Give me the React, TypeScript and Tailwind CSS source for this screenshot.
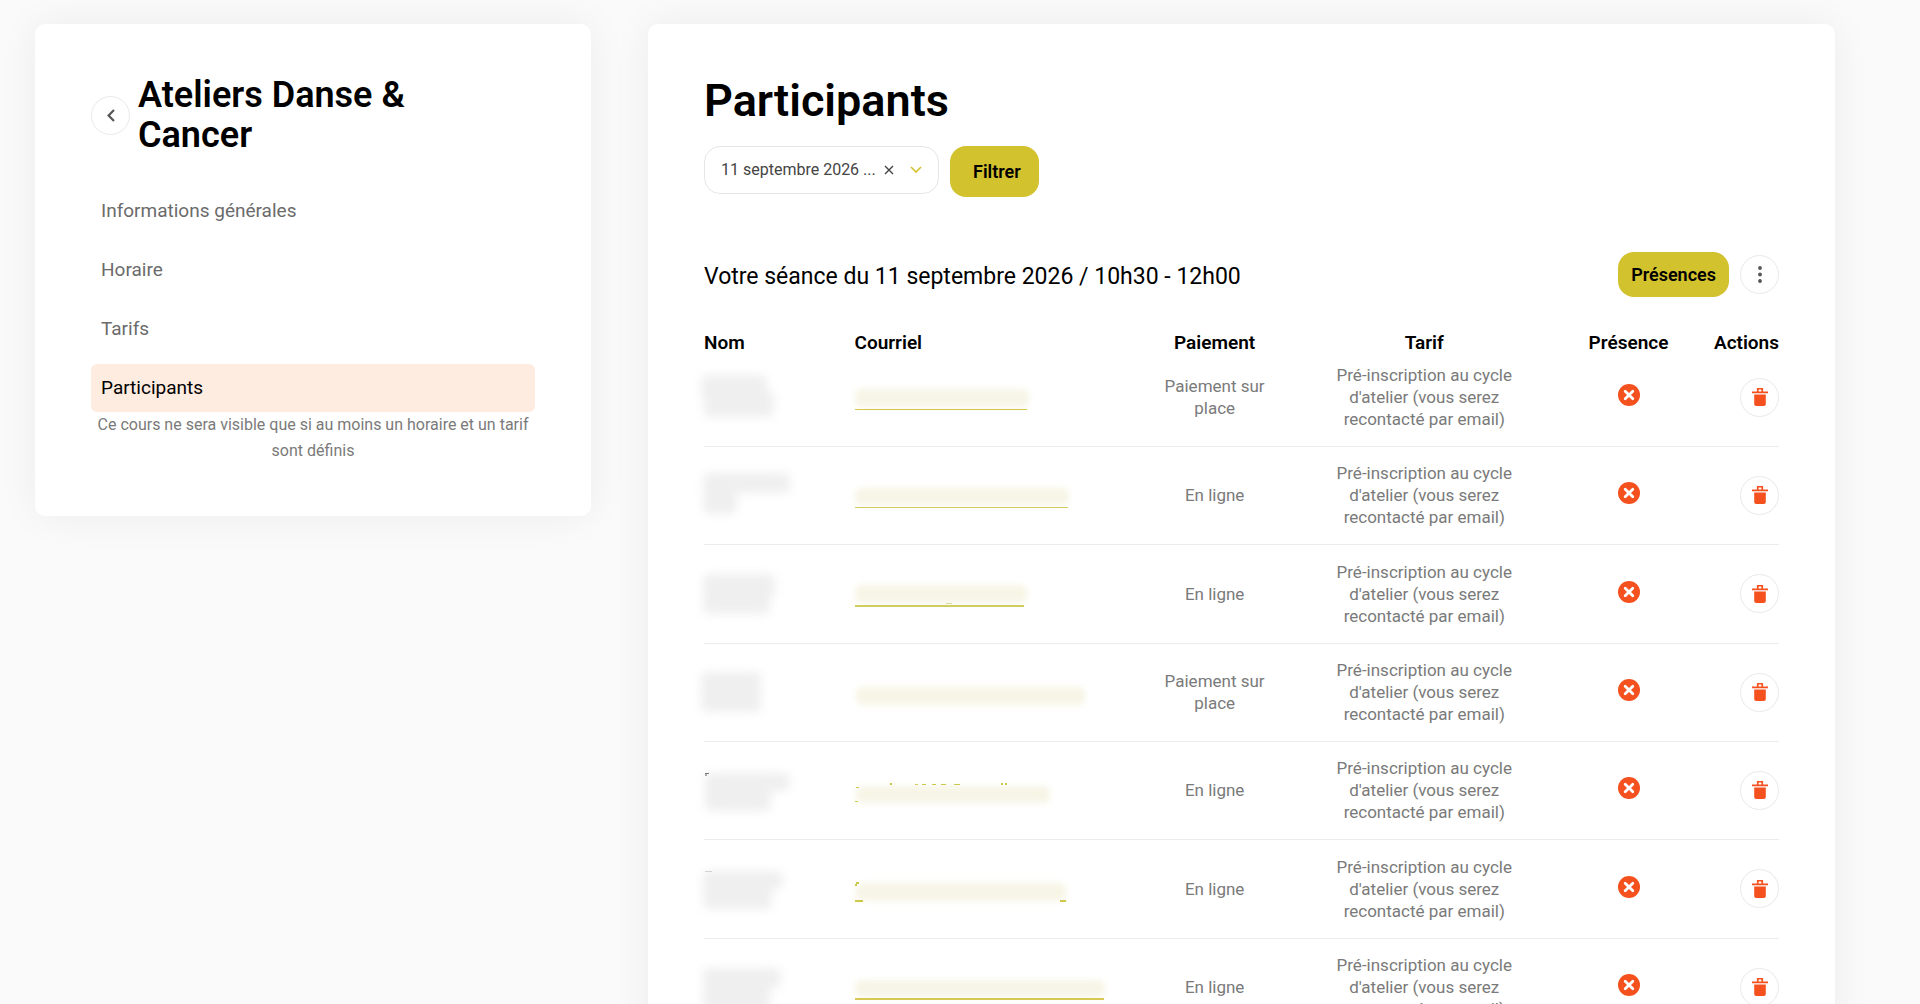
import React from "react";

type Shape = { x: number; y: number; w: number; h: number };
type Stroke = Shape & { color: string };
type Participant = {
  payment: string;
  name: Shape[];
  nameMarks?: Stroke[];
  email: Shape;
  emailMarks: Stroke[];
};

const RATE = "Pré-inscription au cycle d'atelier (vous serez recontacté par email)";

const participants: Participant[] = [
  {
    payment: "Paiement sur place",
    name: [{ x: -3, y: 0, w: 66, h: 24 }, { x: 0, y: 16, w: 70, h: 26 }],
    email: { x: 0, y: 14, w: 174, h: 18 },
    emailMarks: [{ x: 0, y: 34, w: 172, h: 1, color: "#d3c847" }],
  },
  {
    payment: "En ligne",
    name: [{ x: -1, y: 0, w: 87, h: 20 }, { x: -1, y: 14, w: 34, h: 27 }],
    email: { x: 0, y: 15, w: 214, h: 17 },
    emailMarks: [{ x: 0, y: 34, w: 213, h: 1, color: "#d3cb5a" }],
  },
  {
    payment: "En ligne",
    name: [{ x: -1, y: 2, w: 72, h: 24 }, { x: -1, y: 18, w: 67, h: 24 }],
    email: { x: 0, y: 13, w: 172, h: 18 },
    emailMarks: [
      { x: 91, y: 31, w: 6, h: 1, color: "#dcd99a" },
      { x: 0, y: 33, w: 169, h: 2, color: "#cfcd60" },
    ],
  },
  {
    payment: "Paiement sur place",
    name: [{ x: -3, y: 2, w: 60, h: 40 }],
    email: { x: 1, y: 17, w: 229, h: 18 },
    emailMarks: [],
  },
  {
    payment: "En ligne",
    name: [{ x: 1, y: 5, w: 85, h: 18 }, { x: 1, y: 14, w: 66, h: 29 }],
    nameMarks: [{ x: 1, y: 5, w: 4, h: 1, color: "#777777" }, { x: 1, y: 6, w: 2, h: 2, color: "#aaaaaa" }],
    email: { x: 1, y: 18, w: 194, h: 17 },
    emailMarks: [
      { x: 35, y: 15, w: 2, h: 2, color: "#c9c84a" },
      { x: 60, y: 16, w: 3, h: 1, color: "#d3cb5a" },
      { x: 67, y: 16, w: 4, h: 1, color: "#c9c84a" },
      { x: 77, y: 16, w: 4, h: 1, color: "#c9c84a" },
      { x: 86, y: 16, w: 5, h: 1, color: "#c9c84a" },
      { x: 99, y: 16, w: 6, h: 1, color: "#c9c84a" },
      { x: 146, y: 15, w: 2, h: 2, color: "#c9c84a" },
      { x: 150, y: 15, w: 2, h: 2, color: "#c9c84a" },
      { x: 1, y: 19, w: 3, h: 1, color: "#c9c84a" },
      { x: 0, y: 33, w: 3, h: 1, color: "#c9c84a" },
    ],
  },
  {
    payment: "En ligne",
    name: [{ x: -1, y: 4, w: 80, h: 18 }, { x: -1, y: 14, w: 69, h: 28 }],
    nameMarks: [{ x: 1, y: 4, w: 7, h: 1, color: "#d4d4d4" }],
    email: { x: 1, y: 16, w: 210, h: 18 },
    emailMarks: [
      { x: 1, y: 15, w: 3, h: 2, color: "#c9c84a" },
      { x: 0, y: 17, w: 2, h: 2, color: "#c9c84a" },
      { x: 0, y: 33, w: 8, h: 2, color: "#cfc748" },
      { x: 205, y: 33, w: 6, h: 2, color: "#cfc748" },
    ],
  },
  {
    payment: "En ligne",
    name: [{ x: -1, y: 3, w: 78, h: 20 }, { x: -1, y: 18, w: 67, h: 42 }, { x: 2, y: 32, w: 60, h: 24 }],
    email: { x: 0, y: 15, w: 250, h: 17 },
    emailMarks: [{ x: 0, y: 33, w: 249, h: 2, color: "#d6c850" }],
  },
];

const navItems = ["Informations générales", "Horaire", "Tarifs", "Participants"];

function Redacted({ shapes, marks, fill, blur, label }: { shapes: Shape[]; marks: Stroke[]; fill: string; blur: number; label: string }) {
  return (
    <svg className="block h-11 w-full overflow-visible" role="img" aria-label={label}>
      <g fill={fill} style={{ filter: `blur(${blur}px)` }}>
        {shapes.map((s, i) => (
          <rect key={i} x={s.x} y={s.y} width={s.w} height={s.h} rx="6" />
        ))}
      </g>
      {marks.map((m, i) => (
        <rect key={i} x={m.x} y={m.y} width={m.w} height={m.h} fill={m.color} />
      ))}
    </svg>
  );
}

function CrossIcon() {
  return (
    <svg viewBox="0 0 22 22" className="size-[22px]" aria-hidden="true">
      <circle cx="11" cy="11" r="11" fill="#f4511e" />
      <path d="M7.2 7.2l7.6 7.6M14.8 7.2l-7.6 7.6" stroke="#fff" strokeWidth="2.8" strokeLinecap="round" />
    </svg>
  );
}

function TrashIcon() {
  return (
    <svg viewBox="0 0 16 18" className="h-[18px] w-4" fill="#f4511e" aria-hidden="true">
      <path fillRule="evenodd" d="M4.9 0h6.2v3.6H16v1.7H0V3.6h4.9zm1.7 1.5v2.1h2.8V1.5z" />
      <path d="M2.2 6.6h11.6V16a2 2 0 0 1-2 2H4.2a2 2 0 0 1-2-2z" />
    </svg>
  );
}

const roundButton =
  "flex size-[39px] shrink-0 items-center justify-center rounded-full border border-[#e9e9e9] bg-white";

function Sidebar() {
  return (
    <aside className="min-w-0 rounded-[10px] bg-white px-14 pt-[51px] pb-[52px] shadow-[0_0_40px_rgba(0,0,0,0.06)]">
      <div className="flex items-center gap-2 pr-16">
        <button type="button" aria-label="Retour" className={roundButton}>
          <svg viewBox="0 0 8 13" className="h-[13px] w-2" fill="none" stroke="#555" strokeWidth="2.2" aria-hidden="true">
            <path d="M7 1L1.6 6.5 7 12" />
          </svg>
        </button>
        <h2 className="text-[36px] leading-10 font-semibold text-black">Ateliers Danse &amp; Cancer</h2>
      </div>
      <nav className="mt-8 flex flex-col gap-[11px]">
        {navItems.map((item) => (
          <a
            key={item}
            href="#"
            aria-current={item === "Participants" ? "page" : undefined}
            className="flex h-12 items-center rounded-md px-[10px] text-[19px] text-[#6b6b6b] aria-[current=page]:bg-[#feece0] aria-[current=page]:text-black"
          >
            {item}
          </a>
        ))}
      </nav>
      <p className="text-center text-[16px] leading-[26px] text-[#7a7a7a]">
        Ce cours ne sera visible que si au moins un horaire et un tarif sont définis
      </p>
    </aside>
  );
}

export default function App() {
  return (
    <div className="h-screen overflow-y-auto bg-[#fafafa] pt-6 pr-[85px] pl-[35px] font-['Roboto',sans-serif] [scrollbar-width:none]">
      <div className="grid grid-cols-[556fr_1187fr] items-start gap-[57px]">
        <Sidebar />
        <main className="min-w-0 rounded-[10px] bg-white px-14 pt-[51px] pb-14 shadow-[0_0_40px_rgba(0,0,0,0.06)]">
          <h1 className="text-[45px] leading-[52px] font-semibold text-black">Participants</h1>
          <form className="mt-[19px] flex items-start gap-[11px]">
            <div className="flex h-12 w-[235px] items-center rounded-2xl border border-[#e6e6e6] px-4">
              <select aria-label="Séance" className="min-w-0 flex-1 appearance-none bg-transparent text-[16px] text-[#444] outline-none">
                <option>11 septembre 2026 ...</option>
              </select>
              <button type="button" aria-label="Effacer" className="mr-4">
                <svg viewBox="0 0 10 10" className="size-[10px]" stroke="#444" strokeWidth="1.4" aria-hidden="true">
                  <path d="M1 1l8 8M9 1L1 9" />
                </svg>
              </button>
              <svg viewBox="0 0 12 8" className="h-2 w-3" fill="none" stroke="#d2c22e" strokeWidth="1.6" aria-hidden="true">
                <path d="M1 1l5 5 5-5" />
              </svg>
            </div>
            <button type="button" className="h-[51px] rounded-2xl bg-[#d2c22e] pr-[18px] pl-[23px] text-[18px] font-semibold text-black">
              Filtrer
            </button>
          </form>
          <div className="mt-[55px] flex h-[45px] items-center gap-[11px]">
            <h2 className="flex-1 pt-1 text-[23px] leading-7 text-black">Votre séance du 11 septembre 2026 / 10h30 - 12h00</h2>
            <button type="button" className="h-[45px] rounded-2xl bg-[#d2c22e] px-[13px] text-[18px] font-semibold text-black">
              Présences
            </button>
            <button type="button" aria-label="Plus d'options" className={roundButton}>
              <svg viewBox="0 0 4 17" className="h-[17px] w-1" fill="#555" aria-hidden="true">
                <circle cx="2" cy="2" r="1.9" />
                <circle cx="2" cy="8.5" r="1.9" />
                <circle cx="2" cy="15" r="1.9" />
              </svg>
            </button>
          </div>
          <table className="mt-[34px] w-full table-fixed border-collapse text-[17px] leading-[22px] text-[#7a7a7a]">
            <colgroup>
              <col className="w-[14%]" />
              <col className="w-[27%]" />
              <col className="w-[13%]" />
              <col className="w-[26%]" />
              <col className="w-[12%]" />
              <col className="w-[8%]" />
            </colgroup>
            <thead>
              <tr className="text-[19px] leading-6 font-semibold text-black">
                <th className="p-0 text-left font-semibold">Nom</th>
                <th className="p-0 text-left font-semibold">Courriel</th>
                <th className="p-0 font-semibold">Paiement</th>
                <th className="p-0 font-semibold">Tarif</th>
                <th className="p-0 font-semibold">Présence</th>
                <th className="p-0 text-right font-semibold">Actions</th>
              </tr>
            </thead>
            <tbody className="[&_td]:px-0 [&_td]:pt-0">
              {participants.map((p, i) => (
                <tr key={i} className="h-[98px] border-b border-[#ececec] first:h-[91px] nth-[3n]:h-[99px] first:[&>td]:pb-1.5">
                  <td>
                    <Redacted shapes={p.name} marks={p.nameMarks ?? []} fill="#efefef" blur={5} label="Nom masqué" />
                  </td>
                  <td>
                    <a href="#" className="block">
                      <Redacted shapes={[p.email]} marks={p.emailMarks} fill="#f7f5e6" blur={3} label="Courriel masqué" />
                    </a>
                  </td>
                  <td className="text-center">
                    <div className="mx-auto w-28">{p.payment}</div>
                  </td>
                  <td className="text-center">
                    <div className="mx-auto w-[190px]">{RATE}</div>
                  </td>
                  <td>
                    <div className="flex justify-center pb-1">
                      <CrossIcon />
                    </div>
                  </td>
                  <td>
                    <div className="flex justify-end">
                      <button type="button" aria-label="Supprimer" className={roundButton}>
                        <TrashIcon />
                      </button>
                    </div>
                  </td>
                </tr>
              ))}
            </tbody>
          </table>
        </main>
      </div>
    </div>
  );
}
